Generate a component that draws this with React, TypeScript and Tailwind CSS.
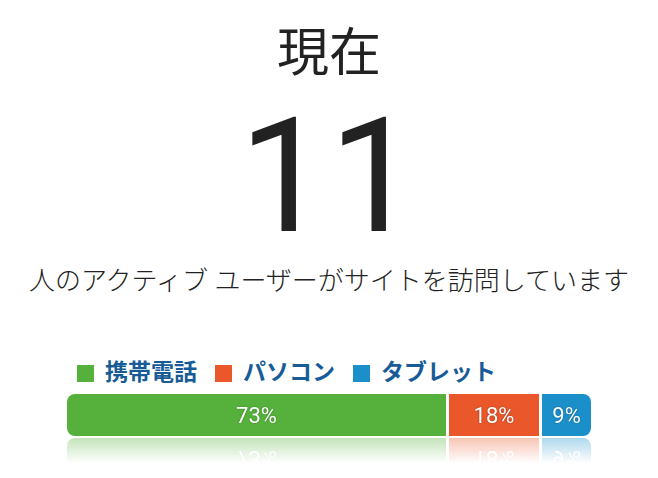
const FONT = "font-['Roboto','Noto_Sans_CJK_JP',sans-serif]";

const SEGMENTS = [
  { label: "携帯電話", pct: 73, width: "w-[379px]", bg: "bg-[#55b13b]", round: "rounded-l-[8px]" },
  { label: "パソコン", pct: 18, width: "w-[90px]", bg: "bg-[#e9572b]", round: "" },
  { label: "タブレット", pct: 9, width: "w-[49px]", bg: "bg-[#1b8fc9]", round: "rounded-r-[8px]" },
];

export default function App() {
  return (
    <div className={`w-[658px] h-[478px] bg-white overflow-hidden flex flex-col items-center ${FONT}`}>
      {/* Heading */}
      <div className="mt-[22px] text-[52px] leading-[64px] text-[#222]">現在</div>
      <div className="mt-[11px] text-[160px] leading-[160px] text-[#222]">11</div>
      <div className="mt-[6px] text-[26px] leading-[36px] font-light text-[#222]">人のアクティブ ユーザーがサイトを訪問しています</div>

      {/* Device breakdown */}
      <div className="mt-[60px] w-[524px] flex flex-col">
        <div className="flex items-center gap-[18px] pl-[10px]">
          {SEGMENTS.map((s) => (
            <div key={s.label} className="flex items-center gap-[11px]">
              <span className={`w-[17px] h-[17px] ${s.bg}`} />
              <span className="text-[23px] leading-[28px] font-bold text-[#175c97]">{s.label}</span>
            </div>
          ))}
        </div>
        <div className="mt-[7px] flex gap-[3px] [-webkit-box-reflect:below_2px_linear-gradient(transparent_40%,rgba(255,255,255,0.35))]">
          {SEGMENTS.map((s) => (
            <div
              key={s.label}
              className={`${s.width} ${s.bg} ${s.round} h-[42px] flex items-center justify-center text-white text-[22px] [text-shadow:0_0_2px_rgba(0,0,0,0.35)]`}
            >
              {s.pct}%
            </div>
          ))}
        </div>
      </div>
    </div>
  );
}
